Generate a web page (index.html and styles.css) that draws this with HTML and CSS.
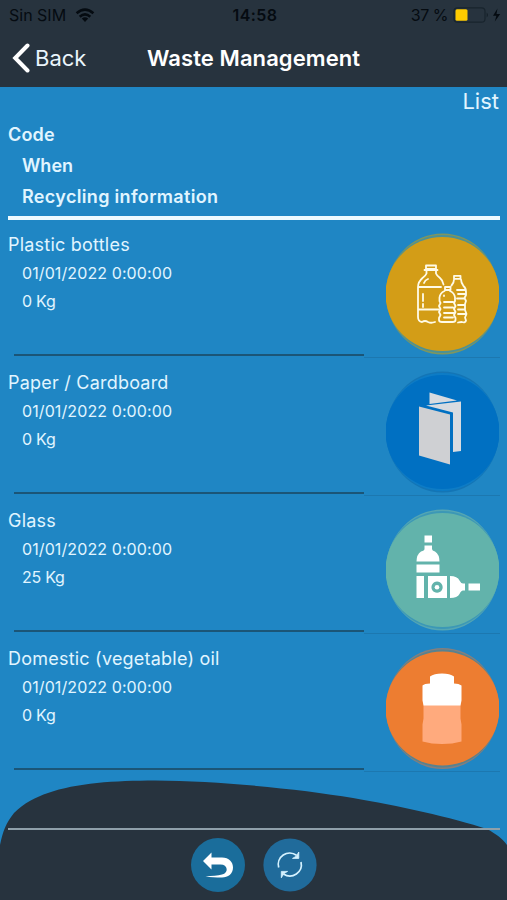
FILE: index.html
```html
<!DOCTYPE html>
<html lang="en">
<head>
<meta charset="utf-8">
<title>Waste Management</title>
<link rel="stylesheet" href="styles.css">
</head>
<body>
<div class="screen">
  <header class="header">
    <div class="status">
      <div class="carrier"><span>Sin SIM</span>
        <svg width="20" height="15" viewBox="0 0 20 15"><g fill="none" stroke="#050b11" stroke-width="2.6"><path d="M1.6 5.3Q10-2 18.4 5.3"/><path d="M4.7 8.7Q10 4.1 15.3 8.7"/></g><path d="M6.8 10.6Q10 8 13.2 10.6L10 14Z" fill="#050b11"/></svg>
      </div>
      <div class="clock">14:58</div>
      <div class="power"><span>37 %</span>
        <svg width="48" height="16" viewBox="0 0 48 16"><rect x="1" y=".8" width="31" height="14.4" rx="3.5" fill="none" stroke="#18242d" stroke-width="1.2"/><rect x="2.5" y="2.3" width="12" height="11.4" rx="1.5" fill="#ffcc00"/><path d="M33.7 5.5q2.5 2.500 0 5" fill="#141f28"/><path d="M44.5 1.500L40 8.800h3.400L41.800 14.500 47.200 7H43.500Z" fill="#050b11"/></svg>
      </div>
    </div>
    <div class="nav">
      <div class="back"><svg width="18" height="30" viewBox="0 0 18 30"><path d="M15.500 2.500L3.200 15 15.500 27.500" fill="none" stroke="#fff" stroke-width="4" stroke-linecap="round"/></svg><span>Back</span></div>
      <h1 class="title">Waste Management</h1>
    </div>
  </header>
  <main class="content">
    <div class="mode">List</div>
    <div class="columns">
      <div class="code">Code</div>
      <div class="when">When</div>
      <div class="info">Recycling information</div>
    </div>
    <div class="item">
      <div class="text"><h2>Plastic bottles</h2><p>01/01/2022 0:00:00</p><p>0 Kg</p></div>
      <svg class="badge" viewBox="0 0 113 124">
        <ellipse cx="56.5" cy="62" rx="56.5" ry="60.500" fill="#7e965f"/><ellipse cx="56.5" cy="62" rx="56.5" ry="59" fill="#4d9195"/><circle cx="56.5" cy="62" r="57" fill="#d39d17"/>
        <g transform="translate(-1 0)" fill="none" stroke="#fffbe8" stroke-width="1.8" stroke-linejoin="round" stroke-linecap="round">
          <path d="M41 33.500h10v3.500h-10zM39.500 38h13M41.500 38v3.500q-1 2.500-4 4.500-4.500 4-4.500 9v30q0 4.500 4 5 3-2 6 0 3 1.500 7 0M51 38v3.500q1 2.500 4 4.500 3 2.500 3.500 6.500M33 55h23M33 77.500h21M38 62v7M38 72v3M39 51q1-3 4-4"/>
          <path d="M60 55h5.500v3H60zM59.500 59q-4.500 2-5 6.500v3.500l1 2-1.500 3 1.500 3-1.500 3 1.500 3-1.500 3v2q0 2 3 2h10.500q3 0 3-2v-2l-1.500-3 1.500-3-1.500-3 1.500-3-1.500-3 1-2v-3.500q-.5-4.500-5-6.500M59 70h9M59 75.500h9M59 81h10M59 85.500h9M59 63.500v.5"/>
          <path d="M69 43.800h6.500v3H69zM69 47.500q0 3.500-2.500 6M76 47.500q0 3 2.500 6.500 2.500 2 2.500 6v3l-1.500 3 1.500 3-1 3v6l1.500 4-1.500 3.500 1 3q-.5 2.500-4 1.500-2 0-4 .5M72 58h8M73 62h7M72 66.500h7M73 73h7M73 77.500h7M73 82h7"/>
        </g>
      </svg>
    </div>
    <div class="item">
      <div class="text"><h2>Paper / Cardboard</h2><p>01/01/2022 0:00:00</p><p>0 Kg</p></div>
      <svg class="badge" viewBox="0 0 113 124">
        <ellipse cx="56.5" cy="62" rx="56.5" ry="60.500" fill="#1475b5"/><ellipse cx="56.5" cy="62" rx="56.5" ry="59" fill="#0d7cc6"/><circle cx="56.5" cy="62" r="57" fill="#0070c2"/>
        <path d="M43.500 22.500L71 30.500 43.500 34ZM40 35.500l35-4v49.500l-8 1V42.500Z" fill="#d7dbe0"/><path d="M33 36.500L64 44.500v50L33 85.500Z" fill="#cfd0d3"/>
      </svg>
    </div>
    <div class="item">
      <div class="text"><h2>Glass</h2><p>01/01/2022 0:00:00</p><p>25 Kg</p></div>
      <svg class="badge" viewBox="0 0 113 124">
        <ellipse cx="56.5" cy="62" rx="56.5" ry="60.500" fill="#55a6b3"/><ellipse cx="56.5" cy="62" rx="56.5" ry="59" fill="#3c98b6"/><circle cx="56.5" cy="62" r="57" fill="#62b3ab"/>
        <g fill="#fff" transform="translate(0 .6)"><path d="M38.500 27h7.500v7h-7.500zM38.500 37H46v3.500q0 1.500 3 2.500 4.500 3 4.500 10H30.500q0-7 4.500-10 3.500-1 3.500-2.500zM30.500 56h23v8h-23zM30.500 67.500H38v22H30.500zM64 67.500q7.500 0 9.500 4.500 1.500 3 3.500 3h2v7h-2q-2 0-3.500 3.500-2 4-9.500 4zM82.500 75H94v7H82.500z"/><path fill-rule="evenodd" d="M42 67.500h19v22H42zM51 73a5.600 5.600 0 1 0 .1 0z"/><circle cx="51" cy="78.700" r="2.300"/></g>
      </svg>
    </div>
    <div class="item">
      <div class="text"><h2>Domestic (vegetable) oil</h2><p>01/01/2022 0:00:00</p><p>0 Kg</p></div>
      <svg class="badge" viewBox="0 0 113 124">
        <ellipse cx="56.5" cy="62.5" rx="56.5" ry="60.500" fill="#847f7e"/><ellipse cx="56.5" cy="62.5" rx="56.5" ry="59" fill="#58828f"/><circle cx="56.5" cy="62.5" r="57" fill="#ed7d31"/>
        <g transform="translate(-.5 .6)"><path d="M38 58h37v14l1 6v17q-9 2.500-19.500 2.500T37 95V78l1-6z" fill="#ffaa7d"/><path d="M44.500 37v-7q4-3 12-3t12 3v7q5 0 7.500 2v15l-1 5H38l-1-5V39q2-2 7.500-2z" fill="#fff"/></g>
      </svg>
    </div>
  </main>
  <footer class="footer">
    <svg class="hill" viewBox="0 780 507 120"><path d="M0 845C3 831 6 823 14 813 24 803 36 797 48 793 76 783 115 780.500 155 780.500 220 781 300 789 353 798 395 805 454 818 487 829 496 834 502 838 507 845V900H0Z" fill="#27333e"/></svg>
    <div class="actions">
      <svg class="action" width="54" height="54" viewBox="0 0 54 54"><circle cx="27" cy="27" r="27" fill="#1a6d9b"/><path d="M12 23L20.500 14.500V19.500H31C38 19.500 42 24 42 29.500 42 36 37 39.500 31 39.500 25 39.500 19 39.300 14.500 38.500 21 38 27 37.500 31 36.500 38 35 37 26.500 29.500 26.500H20.500V31.500Z" fill="#fff"/></svg>
      <svg class="action" width="54" height="54" viewBox="0 0 54 54"><circle cx="27" cy="27" r="26.600" fill="#206b9b"/><path d="M15.700 29.500A11.400 11.400 0 0 1 33.500 17.300M38 24A11.400 11.400 0 0 1 20.500 36" fill="none" stroke="#d5f2ff" stroke-width="1.700"/><path d="M35.800 14V20.400H29.500L33.200 18.200ZM18.300 39.800V33.400H24.600L20.900 35.600Z" fill="#d5f2ff" stroke="#d5f2ff" stroke-width=".8"/></svg>
    </div>
  </footer>
</div>
</body>
</html>
```

FILE: styles.css
```css
* { box-sizing: border-box; }
body { margin: 0; font-family: Inter, "Liberation Sans", sans-serif; }
h1, h2, p { margin: 0; }
svg { display: block; flex: none; }
.screen { position: relative; width: 507px; height: 900px; overflow: hidden; background: #1f86c4; color: #e1f5ff; display: flex; flex-direction: column; }
.header { height: 87px; background: #27333e; flex: none; }
.status { height: 30px; display: grid; grid-template-columns: 1fr auto 1fr; align-items: center; padding: 0 6px 0 9px; color: #050b11; font-size: 16px; line-height: 30px; }
.carrier, .power { display: flex; align-items: center; }
.carrier { gap: 9px; }
.power { justify-content: flex-end; gap: 5px; }
.power span { letter-spacing: -.5px; }
.clock { font-weight: 600; letter-spacing: .4px; }
.nav { height: 55px; display: grid; grid-template-columns: 147px 1fr; align-items: center; color: #fff; }
.back { display: flex; align-items: center; gap: 5px; padding-left: 12px; font-size: 22px; color: #eaf5fb; }
.title { font-size: 22px; font-weight: 600; letter-spacing: .08px; white-space: nowrap; }
.content { padding: 0 7px 0 8px; flex: none; }
.mode { height: 28px; line-height: 28px; font-size: 22px; text-align: right; padding-right: 1px; }
.columns { height: 105px; padding-top: 4px; border-bottom: 4px solid #edfaff; font-size: 18px; font-weight: 600; line-height: 31px; }
.when, .info { padding-left: 14px; }
.code { letter-spacing: .2px; }
.info { letter-spacing: .33px; }
.item { height: 138px; display: flex; justify-content: space-between; background: linear-gradient(#1c78b0, #1c78b0) right bottom / 136px 1px no-repeat; }
.text { width: 356px; height: 138px; padding-top: 11px; white-space: nowrap; }
.text::after { content: ""; display: block; height: 2px; margin: 39px 0 0 6px; background: #1b5577; }
.text h2 { font-size: 18px; font-weight: 400; line-height: 28px; letter-spacing: .22px; }
.text h2 + p { letter-spacing: .1px; }
.text p { font-size: 16px; line-height: 28px; padding-left: 14px; }
.text p:last-child { letter-spacing: -.25px; }
.badge { width: 113px; height: 124px; margin: 12px 1px 0 0; }
.footer { position: absolute; left: 0; right: 0; bottom: 0; height: 120px; padding: 48px 7px 0 8px; }
.hill { position: absolute; inset: 0; width: 507px; height: 120px; }
.actions { position: relative; border-top: 2px solid #8fa0aa; padding: 8px 0 0 183px; display: flex; gap: 18px; }
```
